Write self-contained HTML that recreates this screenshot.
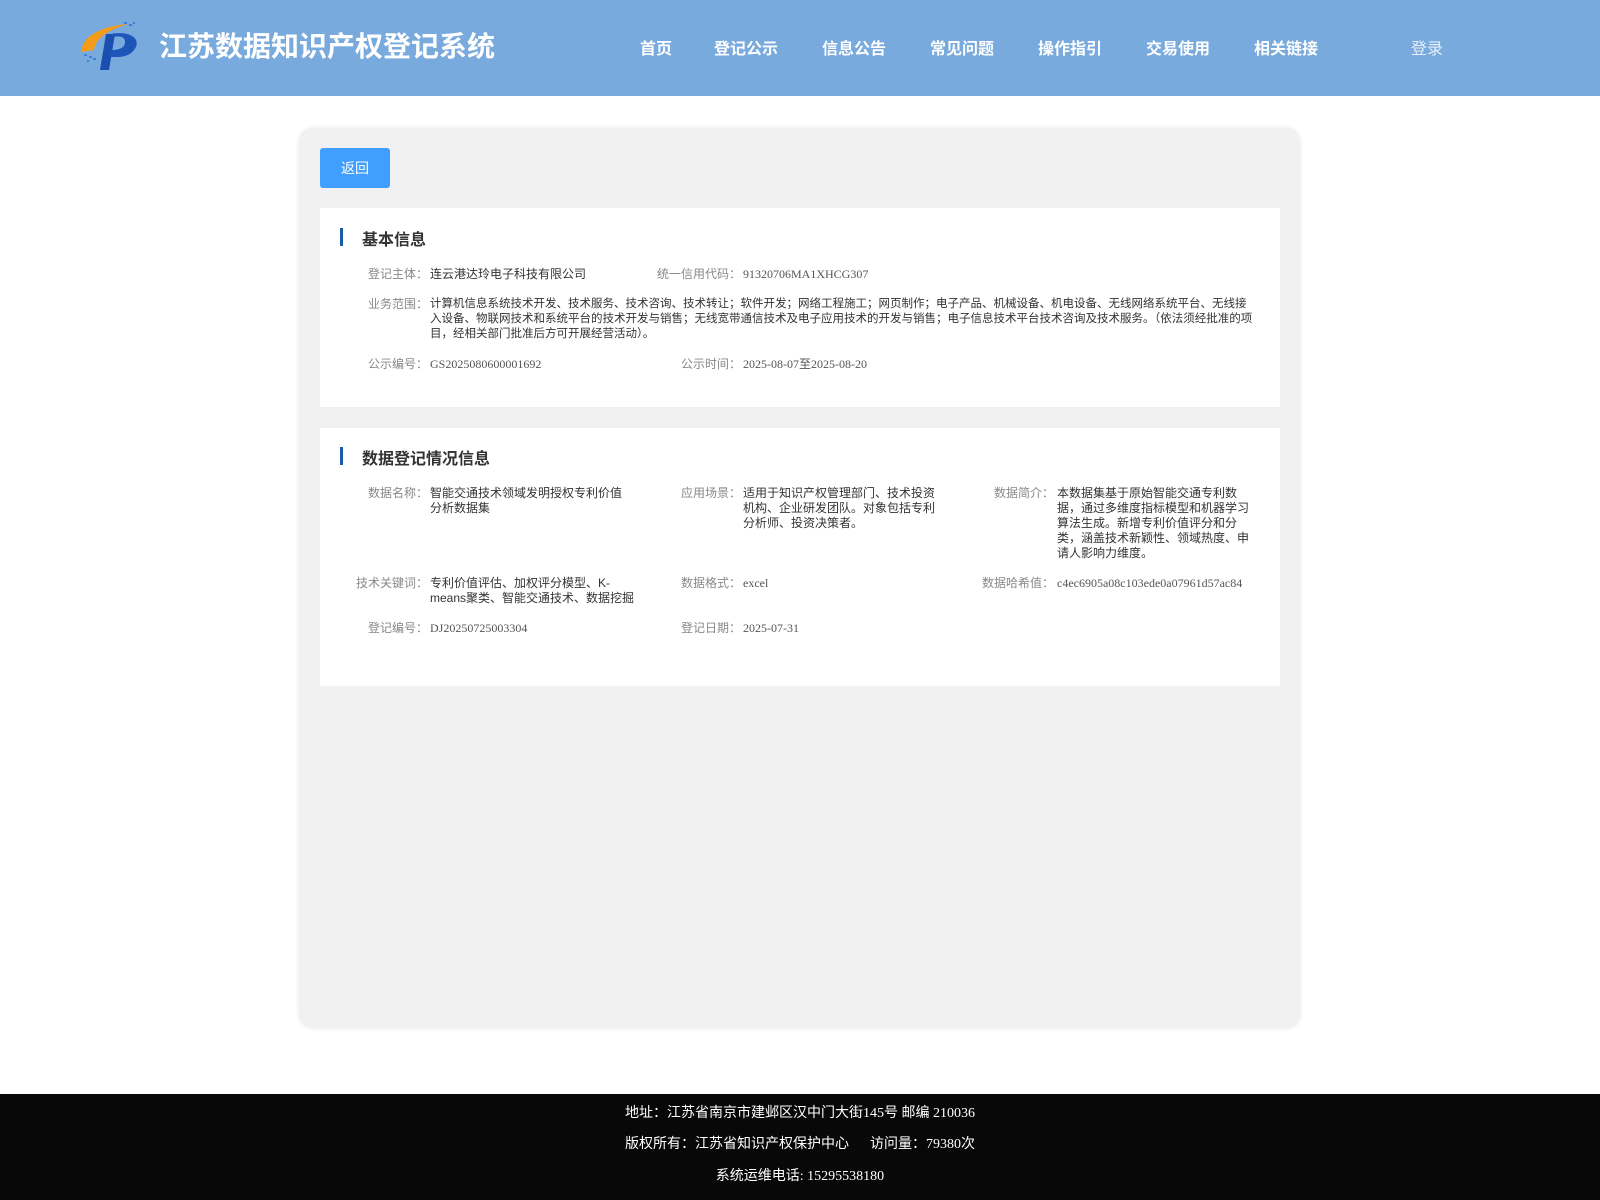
<!DOCTYPE html>
<html><head><meta charset="utf-8"><style>
*{margin:0;padding:0;box-sizing:border-box}
body{width:1600px;height:1200px;background:#fff;font-family:"Liberation Serif","Noto Sans CJK SC",serif;position:relative;overflow:hidden}
.hd{position:absolute;left:0;top:0;width:1600px;height:96px;background:#78aadd}
.title{position:absolute;left:159px;top:25px;font-size:28px;color:#fff;font-family:"Liberation Sans","Noto Sans CJK SC",sans-serif;font-weight:bold}
.nav{position:absolute;top:35px;font-size:16px;color:#fff;font-weight:bold;font-family:"Liberation Sans","Noto Sans CJK SC",sans-serif}
.box{position:absolute;left:299px;top:128px;width:1001px;height:900px;background:#f1f1f1;border-radius:14px;box-shadow:0 0 4px rgba(0,0,0,.1)}
.btn{position:absolute;left:320px;top:148px;width:70px;height:40px;background:#409eff;color:#fff;border-radius:3px;font-size:14px;text-align:center;line-height:40px;font-family:"Liberation Sans","Noto Sans CJK SC",sans-serif}
.card{position:absolute;left:320px;width:960px;background:#fff}
.ct{position:absolute;left:42px;font-size:16px;font-weight:bold;color:#333;font-family:"Liberation Sans","Noto Sans CJK SC",sans-serif}
.bar{position:absolute;left:20px;width:3px;height:18px;background:#1a5ca8}
.r{position:absolute;font-size:12px;line-height:15px;color:#333}
.l{position:absolute;font-size:12px;line-height:15px;color:#888;text-align:right;font-family:"Liberation Sans","Noto Sans CJK SC",sans-serif}
.v{font-family:"Liberation Serif","Noto Sans CJK SC",serif}
.ft{position:absolute;left:0;top:1094px;width:1600px;height:106px;background:#080808;color:#fff;font-size:14px;text-align:center}
.ft div{position:absolute;left:0;width:1600px}
</style></head><body>
<div class="hd">
<svg style="position:absolute;left:80px;top:20px" width="60" height="52" viewBox="0 0 60 52">
<path d="M2 32 C0 18 20 6 48 4 C32 9 16 16 14 30 Z" fill="#f39c1a"/>
<path d="M26 14 L35 14 L29 50 L20 50 Z" fill="#1a4fb0"/>
<path d="M30 14 C52 10 62 20 54 30 C48 38 37 37 30 37 L31 30 C39 30 45 28 45 22 C45 16 39 16 33 17 Z" fill="#1d55b8"/>
<g fill="#3a7fd8"><rect x="44" y="2" width="3" height="2"/><rect x="49" y="4" width="3" height="2"/><rect x="53" y="2" width="2" height="2"/><rect x="4" y="34" width="3" height="2"/><rect x="9" y="36" width="3" height="2"/><rect x="13" y="38" width="3" height="2"/><rect x="7" y="40" width="2" height="2"/></g>
</svg>
<div class="title">江苏数据知识产权登记系统</div>
<div class="nav" style="left:640px">首页</div>
<div class="nav" style="left:714px">登记公示</div>
<div class="nav" style="left:822px">信息公告</div>
<div class="nav" style="left:930px">常见问题</div>
<div class="nav" style="left:1038px">操作指引</div>
<div class="nav" style="left:1146px">交易使用</div>
<div class="nav" style="left:1254px">相关链接</div>
<div class="nav" style="left:1411px;color:#e6eef8;font-weight:normal">登录</div>
</div>
<div class="box"></div>
<div class="btn">返回</div>
<div class="card" style="top:208px;height:199px">
<div class="bar" style="top:20px"></div><div class="ct" style="top:18px">基本信息</div>
<div class="l" style="left:40px;width:68px;top:59px">登记主体：</div><div class="r" style="left:110px;top:59px;font-family:'Liberation Sans','Noto Sans CJK SC',sans-serif">连云港达玲电子科技有限公司</div>
<div class="l" style="left:300px;width:121px;top:59px">统一信用代码：</div><div class="r v" style="left:423px;top:59px;color:#555">91320706MA1XHCG307</div>
<div class="l" style="left:40px;width:68px;top:89px">业务范围：</div><div class="r" style="left:110px;top:89px;width:825px;font-family:'Liberation Sans','Noto Sans CJK SC',sans-serif;font-size:11.5px">计算机信息系统技术开发、技术服务、技术咨询、技术转让；软件开发；网络工程施工；网页制作；电子产品、机械设备、机电设备、无线网络系统平台、无线接入设备、物联网技术和系统平台的技术开发与销售；无线宽带通信技术及电子应用技术的开发与销售；电子信息技术平台技术咨询及技术服务。（依法须经批准的项目，经相关部门批准后方可开展经营活动）。</div>
<div class="l" style="left:40px;width:68px;top:149px">公示编号：</div><div class="r v" style="left:110px;top:149px;color:#555">GS2025080600001692</div>
<div class="l" style="left:320px;width:101px;top:149px">公示时间：</div><div class="r v" style="left:423px;top:149px;color:#555">2025-08-07至2025-08-20</div>
</div>
<div class="card" style="top:428px;height:258px">
<div class="bar" style="top:19px"></div><div class="ct" style="top:17px">数据登记情况信息</div>
<div class="l" style="left:20px;width:88px;top:58px">数据名称：</div><div class="r" style="left:110px;top:58px;width:200px;font-family:'Liberation Sans','Noto Sans CJK SC',sans-serif">智能交通技术领域发明授权专利价值分析数据集</div>
<div class="l" style="left:320px;width:101px;top:58px">应用场景：</div><div class="r" style="left:423px;top:58px;width:200px;font-family:'Liberation Sans','Noto Sans CJK SC',sans-serif">适用于知识产权管理部门、技术投资机构、企业研发团队。对象包括专利分析师、投资决策者。</div>
<div class="l" style="left:634px;width:100px;top:58px">数据简介：</div><div class="r" style="left:737px;top:58px;width:200px;font-family:'Liberation Sans','Noto Sans CJK SC',sans-serif">本数据集基于原始智能交通专利数据，通过多维度指标模型和机器学习算法生成。新增专利价值评分和分类，涵盖技术新颖性、领域热度、申请人影响力维度。</div>
<div class="l" style="left:20px;width:88px;top:148px">技术关键词：</div><div class="r" style="left:110px;top:148px;width:205px;font-family:'Liberation Sans','Noto Sans CJK SC',sans-serif">专利价值评估、加权评分模型、K-means聚类、智能交通技术、数据挖掘</div>
<div class="l" style="left:320px;width:101px;top:148px">数据格式：</div><div class="r v" style="left:423px;top:148px;color:#555">excel</div>
<div class="l" style="left:634px;width:100px;top:148px">数据哈希值：</div><div class="r v" style="left:737px;top:148px;color:#555">c4ec6905a08c103ede0a07961d57ac84</div>
<div class="l" style="left:20px;width:88px;top:193px">登记编号：</div><div class="r v" style="left:110px;top:193px;color:#555">DJ20250725003304</div>
<div class="l" style="left:320px;width:101px;top:193px">登记日期：</div><div class="r v" style="left:423px;top:193px;color:#555">2025-07-31</div>
</div>
<div class="ft">
<div style="top:8px">地址：江苏省南京市建邺区汉中门大街145号 邮编 210036</div>
<div style="top:39px">版权所有：江苏省知识产权保护中心&nbsp;&nbsp;&nbsp;&nbsp;&nbsp;&nbsp;访问量：79380次</div>
<div style="top:71px">系统运维电话: 15295538180</div>
</div>
</body></html>
